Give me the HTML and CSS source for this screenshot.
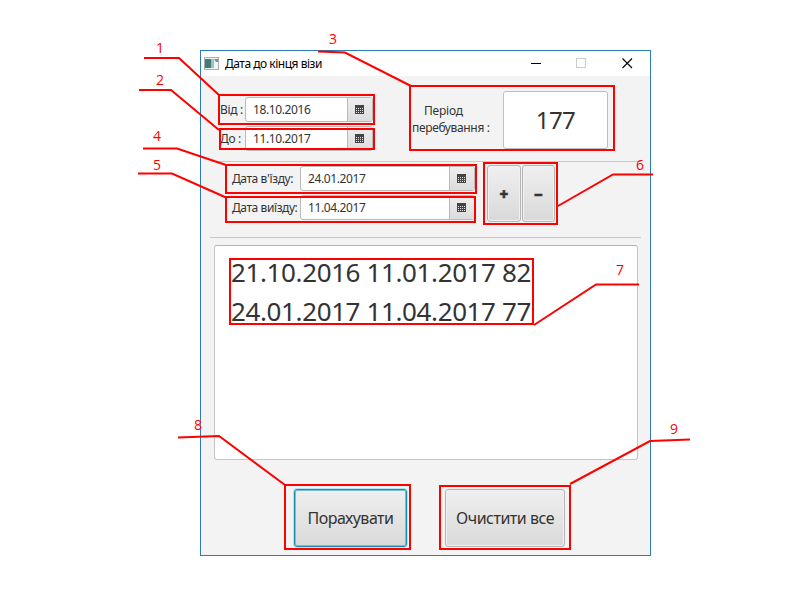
FILE: index.html
```html
<!DOCTYPE html>
<html lang="uk">
<head>
<meta charset="utf-8">
<title>Дата до кінця візи</title>
<link rel="stylesheet" href="styles.css">
</head>
<body>
<svg class="defs" width="0" height="0" aria-hidden="true">
  <symbol id="calendar" viewBox="0 0 9 9">
    <rect width="9" height="9" fill="#444"/>
    <path d="M1 3.5h7M1 5.5h7M1 7.5h7" stroke="#e4e4e4" stroke-width="1" stroke-dasharray="1 1"/>
  </symbol>
</svg>
<main class="window">
  <header class="titlebar">
    <svg class="app-icon" width="15" height="13" viewBox="0 0 15 13">
      <rect x=".5" y=".5" width="14" height="12" fill="#f4f6f6" stroke="#a9aeb0"/>
      <rect x="1" y="2" width="6" height="9" fill="#3f7d78"/>
      <rect x="7" y="2" width="3" height="9" fill="#9ec3b8"/>
      <path d="M10 2h4v3h-2z" fill="#6d969d"/>
    </svg>
    <h1 class="title"><span>Дата до кінця візи</span></h1>
    <svg class="controls" width="104" height="12" viewBox="0 0 104 12">
      <path d="M0 6.5h10" stroke="#000"/>
      <rect x="45.500" y="1.500" width="9" height="9" fill="none" stroke="#c8cdd0"/>
      <path d="M91.500 1.500l9.500 9.500M101 1.500l-9.500 9.500" stroke="#000" stroke-width="1.100"/>
    </svg>
  </header>
  <section class="period">
    <div class="range">
      <div class="row"><span class="label">Від :</span><div class="field"><span class="value">18.10.2016</span><button class="pick"><svg width="9" height="9"><use href="#calendar"/></svg></button></div></div>
      <div class="row"><span class="label">До :</span><div class="field"><span class="value">11.10.2017</span><button class="pick"><svg width="9" height="9"><use href="#calendar"/></svg></button></div></div>
    </div>
    <p class="stay"><span class="stay-first">Період</span><span>перебування :</span></p>
    <div class="total">177</div>
  </section>
  <section class="entry">
    <div class="range trip">
      <div class="row"><span class="label">Дата в'їзду:</span><div class="field"><span class="value">24.01.2017</span><button class="pick"><svg width="9" height="9"><use href="#calendar"/></svg></button></div></div>
      <div class="row"><span class="label">Дата виїзду:</span><div class="field"><span class="value">11.04.2017</span><button class="pick"><svg width="9" height="9"><use href="#calendar"/></svg></button></div></div>
    </div>
    <div class="steps">
      <button class="btn plus">+</button>
      <button class="btn minus">−</button>
    </div>
  </section>
  <ul class="trips">
    <li>21.10.2016 11.01.2017 82</li>
    <li>24.01.2017 11.04.2017 77</li>
  </ul>
  <footer class="actions">
    <button class="btn calc">Порахувати</button>
    <button class="btn clear">Очистити все</button>
  </footer>
</main>
<svg class="callouts" width="800" height="600" viewBox="0 0 800 600">
  <g class="marks">
    <rect x="219" y="95" width="155" height="29"/>
    <rect x="220" y="129" width="154" height="20"/>
    <rect x="410" y="86" width="204" height="64"/>
    <rect x="226" y="165" width="250" height="28"/>
    <rect x="226" y="197" width="249" height="25"/>
    <rect x="484" y="163" width="73" height="61"/>
    <rect x="230" y="259" width="303" height="65"/>
    <rect x="285" y="485" width="125" height="64"/>
    <rect x="440" y="486" width="130" height="63"/>
    <path d="M144 58H179L220 96"/>
    <path d="M139 90H171L219 130"/>
    <path d="M318 51.500L345 52.500L411 86"/>
    <path d="M143 148.500H177L226 165"/>
    <path d="M138 173.500H172L226 197.500"/>
    <path d="M653 174.500H613L558 206"/>
    <path d="M639 284.500H596L534 325"/>
    <path d="M178 437.500L219 436L285 485"/>
    <path d="M690 439.500L650 441L570 484"/>
  </g>
  <g class="numbers">
    <text x="160" y="53">1</text>
    <text x="160" y="85">2</text>
    <text x="333" y="44">3</text>
    <text x="157" y="141">4</text>
    <text x="157" y="170">5</text>
    <text x="640" y="170">6</text>
    <text x="620" y="275">7</text>
    <text x="198" y="430">8</text>
    <text x="674" y="434">9</text>
  </g>
</svg>
</body>
</html>
```
FILE: styles.css
```css
* { box-sizing: border-box; }
body {
  margin: 0;
  width: 800px;
  height: 600px;
  padding: 50px 0 0 200px;
  overflow: hidden;
  background: #fff;
  font: 12px/17px "Noto Sans", "Open Sans", sans-serif;
  color: #333;
}
.defs { position: absolute; }
.window {
  width: 451px;
  height: 506px;
  border: 1px solid #2b7cb9;
  background: #f3f3f3;
}
.titlebar {
  display: flex;
  align-items: center;
  height: 25px;
  padding: 0 15px 1px 3px;
  background: #fff;
}
.title {
  flex: 1;
  margin: 0 0 0 6px;
  font-size: 12px;
  font-weight: 400;
  letter-spacing: -0.48px;
  color: #000;
}
.period {
  display: flex;
  height: 86px;
  margin: 0 9px 0 10px;
  padding: 15px 0 0 8px;
  border-bottom: 1px solid #c9c9c9;
}
.range {
  display: flex;
  flex-direction: column;
  gap: 4px;
  padding-top: 6px;
}
.row { display: flex; align-items: center; }
.label { width: 26px; padding-left: 1px; letter-spacing: -0.3px; white-space: nowrap; }
.field {
  display: flex;
  width: 128px;
  height: 25px;
  border: 1px solid #b9b9b9;
  border-radius: 3px;
  background: #fff;
  overflow: hidden;
}
.value {
  flex: 1;
  padding-left: 7px;
  line-height: 23px;
  letter-spacing: -0.38px;
}
.pick {
  display: flex;
  align-items: center;
  justify-content: flex-start;
  width: 25px;
  padding: 0 0 0 7px;
  border: 0;
  border-left: 1px solid #b9b9b9;
  background: linear-gradient(#eee, #dcdcdc);
}
.stay {
  display: flex;
  flex-direction: column;
  width: 90px;
  margin: 11px 0 0 39px;
  letter-spacing: -0.35px;
  white-space: nowrap;
}
.stay-first { padding-left: 12px; letter-spacing: -0.2px; }
.total {
  width: 105px;
  height: 58px;
  margin-left: 1px;
  border: 1px solid #bcbfc2;
  border-radius: 3px;
  background: #fff;
  text-align: center;
  font-size: 24px;
  line-height: 55px;
  letter-spacing: -0.6px;
}
.entry {
  display: flex;
  height: 76px;
  margin: 0 9px;
  padding: 3px 0 0 22px;
  border-bottom: 1px solid #c9c9c9;
}
.trip { padding-top: 1px; }
.trip .label { width: 68px; padding-left: 0; letter-spacing: -0.42px; }
.trip .field { width: 175px; }
.steps { display: flex; gap: 1px; margin-left: 12px; }
.btn {
  padding: 0;
  border: 1px solid #b5b5b5;
  border-radius: 3px;
  background: linear-gradient(#efefef, #d9d9d9);
  box-shadow: inset 0 0 0 1px #f0f0f0;
  color: #333;
  font: 16px/20px "Noto Sans", "Open Sans", sans-serif;
  white-space: nowrap;
}
.plus, .minus { width: 34px; height: 57px; font-size: 15px; font-weight: 900; -webkit-text-stroke: 0.5px #333; }
.minus { width: 33px; }
.trips {
  width: 424px;
  height: 215px;
  margin: 7px 0 0 13px;
  padding: 7px 0 0 16px;
  border: 1px solid #c3c5c7;
  border-top-color: #b2b5b8;
  border-radius: 3px;
  background: #fff;
  list-style: none;
  font-size: 26px;
  line-height: 39px;
  letter-spacing: -0.38px;
  white-space: nowrap;
}
.actions {
  display: flex;
  align-items: flex-end;
  gap: 38px;
  padding: 29px 0 0 93px;
}
.calc {
  width: 113px;
  height: 58px;
  border-color: #168eae;
  box-shadow: 0 0 0 1px #b5e3ef, inset 0 0 0 1px #78bfd3;
  letter-spacing: -0.5px;
}
.clear { width: 120px; height: 58px; letter-spacing: -0.5px; }
.callouts { position: absolute; left: 0; top: 0; pointer-events: none; }
.marks { fill: none; stroke: #f00; stroke-width: 2; }
.numbers { fill: #f00; font: 14px "Open Sans", sans-serif; text-anchor: middle; }
```
